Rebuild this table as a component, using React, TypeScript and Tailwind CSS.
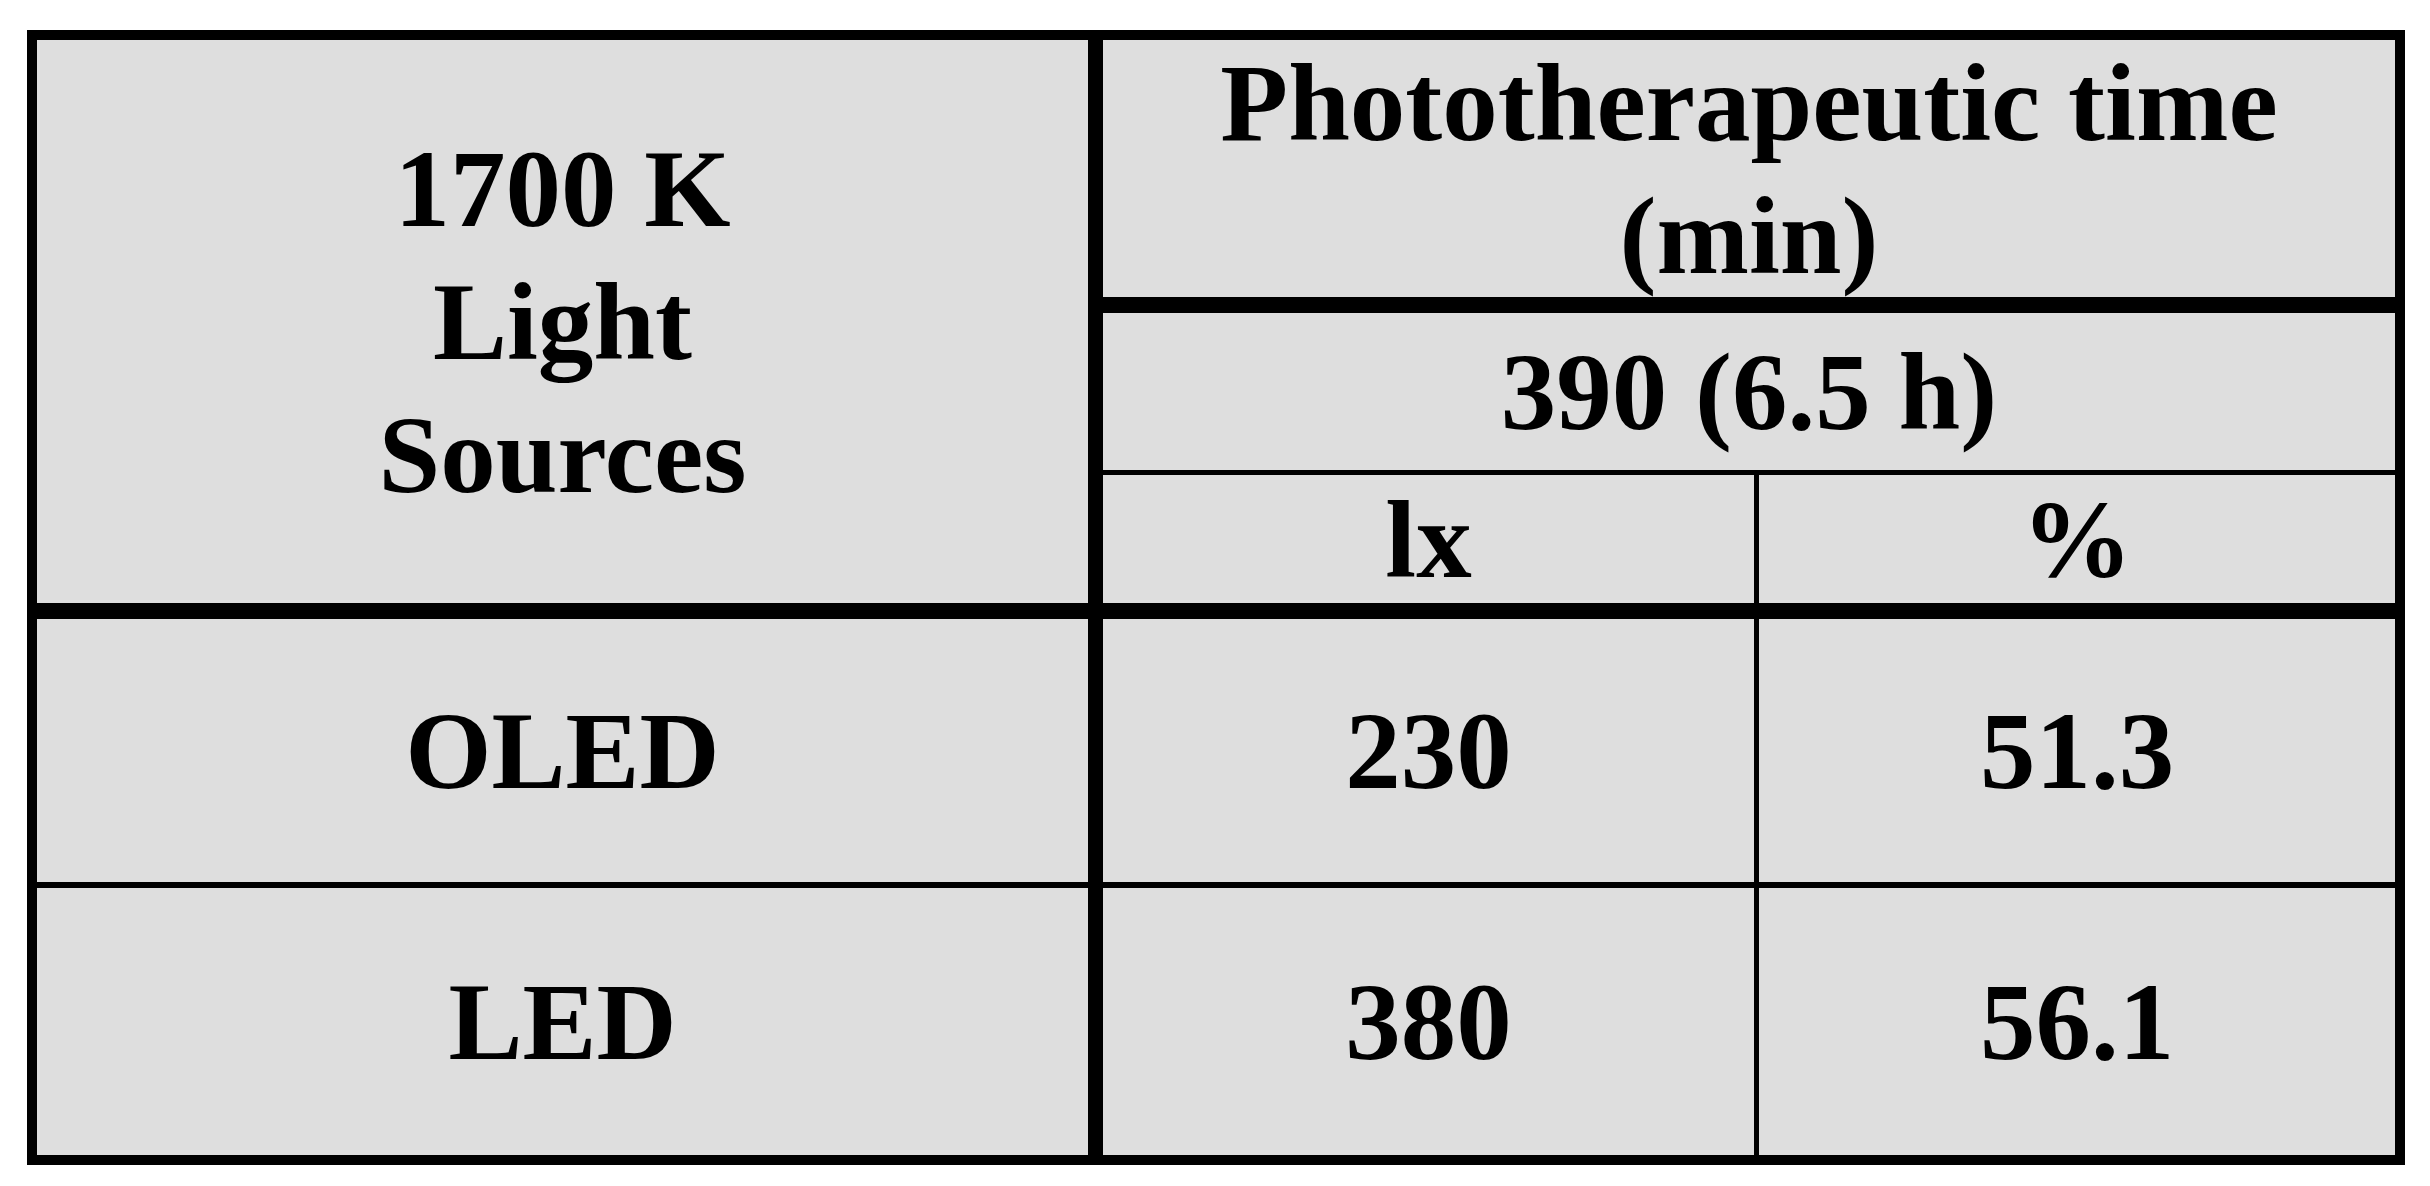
export default function App() {
  const font = { fontFamily: '"Liberation Serif", "Times New Roman", serif' }
  return (
    <div className="w-[2430px] h-[1186px] bg-white pl-[27px] pt-[30px]" style={font}>
      <table className="border-separate border-spacing-0 border-[10px] border-black bg-[#dedede] text-black font-bold text-[111px] leading-[133px] text-center">
        <tbody>
          <tr>
            <td rowSpan={3} className="p-0 w-[1066px] align-middle border-r-[15px] border-b-[16px] border-black">
              1700 K<br />Light<br />Sources
            </td>
            <td colSpan={2} className="p-0 border-b-[16px] border-black">
              <div className="h-[257px] flex flex-col items-center justify-center">
                <span>Phototherapeutic time</span>
                <span>(min)</span>
              </div>
            </td>
          </tr>
          <tr>
            <td colSpan={2} className="p-0 border-b-[5px] border-black">
              <div className="h-[157px] flex items-center justify-center">390 (6.5 h)</div>
            </td>
          </tr>
          <tr>
            <td className="p-0 w-[656px] border-r-[5px] border-b-[16px] border-black">
              <div className="h-[128px] flex items-center justify-center">lx</div>
            </td>
            <td className="p-0 w-[636px] border-b-[16px] border-black">
              <div className="h-[128px] flex items-center justify-center">%</div>
            </td>
          </tr>
          <tr>
            <td className="p-0 border-r-[15px] border-b-[6px] border-black">
              <div className="h-[263px] flex items-center justify-center">OLED</div>
            </td>
            <td className="p-0 border-r-[5px] border-b-[6px] border-black">
              <div className="h-[263px] flex items-center justify-center">230</div>
            </td>
            <td className="p-0 border-b-[6px] border-black">
              <div className="h-[263px] flex items-center justify-center">51.3</div>
            </td>
          </tr>
          <tr>
            <td className="p-0 border-r-[15px] border-black">
              <div className="h-[267px] flex items-center justify-center">LED</div>
            </td>
            <td className="p-0 border-r-[5px] border-black">
              <div className="h-[267px] flex items-center justify-center">380</div>
            </td>
            <td className="p-0">
              <div className="h-[267px] flex items-center justify-center">56.1</div>
            </td>
          </tr>
        </tbody>
      </table>
    </div>
  )
}
